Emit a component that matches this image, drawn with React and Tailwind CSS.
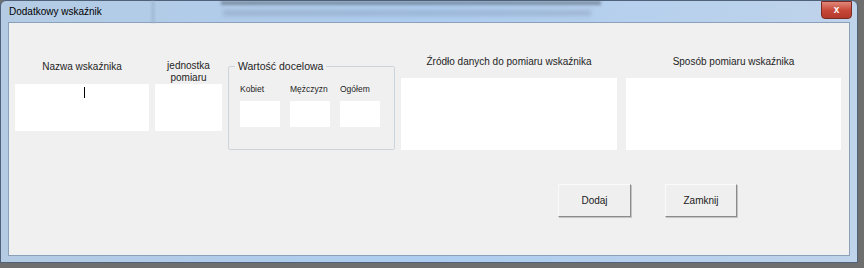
import React from "react";

const font = { fontFamily: '"Liberation Sans", "Noto Sans", sans-serif' };

const Box = ({ className = "", children }) => (
  <div className={`bg-white ${className}`}>{children}</div>
);

const Btn = ({ label, className = "" }) => (
  <button
    className={`h-[33px] bg-[#efefef] border border-t-[#fafafa] border-l-[#fafafa] border-r-[#8c8c8c] border-b-[#8c8c8c] text-[10px] text-[#1a1a1a] ${className}`}
    style={{ boxShadow: "1px 1px 0 #c4c4c4" }}
  >
    {label}
  </button>
);

export default function App() {
  return (
    <div className="w-[864px] h-[268px] bg-[#6e6e6e] overflow-hidden" style={font}>
      <div className="w-[858px] h-[263px] rounded-t-[6px] border border-[#50627a] bg-gradient-to-r from-[#b4cbe3] via-[#aecdf0] to-[#bfd3ea] flex flex-col relative">
        {/* blurred window behind the glass */}
        <div className="absolute left-[220px] top-[0px] w-[380px] h-[4px] bg-[#4a5563] opacity-50 blur-[1.5px]" />
        <div className="absolute left-[222px] top-[9px] w-[368px] h-[6px] bg-[#7f93ad] opacity-40 blur-[2px]" />
        <div className="absolute left-[150px] top-0 w-[4px] h-[22px] bg-[#9bb5d0] opacity-60 blur-[1px]" />

        {/* title bar */}
        <div className="h-[21px] flex items-center justify-between relative">
          <span className="ml-[8px] text-[10px] text-black">Dodatkowy wskaźnik</span>
          <div className="w-[31px] h-[18px] mr-[5px] -mt-[3px] rounded-b-[4px] border border-[#7a2a22] bg-gradient-to-b from-[#e0877b] via-[#c8493a] to-[#b43a2b] flex items-center justify-center text-white text-[10px] font-bold leading-none">
            x
          </div>
        </div>

        {/* client area */}
        <div className="mx-[7px] mb-[6px] flex-1 border border-[#8aa0bb] bg-[#f0f0f0] flex flex-col text-[10px] text-[#1e1e1e]">
          <div className="flex items-start ml-[6px]">
            {/* Nazwa wskaźnika */}
            <div className="w-[134px] pt-[38px] flex flex-col">
              <div className="text-center leading-[12px]">Nazwa wskaźnika</div>
              <Box className="mt-[11px] h-[47px] flex justify-center pt-[3px]">
                <div className="w-px h-[11px] bg-black ml-[5px]" />
              </Box>
            </div>

            {/* jednostka pomiaru */}
            <div className="w-[67px] ml-[6px] pt-[37px] flex flex-col">
              <div className="text-center leading-[12px]">jednostka</div>
              <div className="text-center leading-[12px]">pomiaru</div>
              <Box className="h-[47px]" />
            </div>

            {/* Wartość docelowa */}
            <div className="w-[167px] h-[84px] ml-[6px] mt-[43px] border border-[#cdd5dc] rounded-[2px] relative">
              <span className="absolute -top-[8px] left-[6px] px-[3px] bg-[#f0f0f0] text-[10.5px] leading-[14px]">
                Wartość docelowa
              </span>
              <div className="flex gap-[10px] ml-[11px] mt-[16px]">
                {["Kobiet", "Mężczyzn", "Ogółem"].map((l) => (
                  <div key={l} className="w-[40px] flex flex-col">
                    <div className="text-[8.5px] leading-[12px] whitespace-nowrap">{l}</div>
                    <Box className="mt-[6px] h-[26px]" />
                  </div>
                ))}
              </div>
            </div>

            {/* Źródło danych */}
            <div className="w-[216px] ml-[6px] pt-[33px] flex flex-col">
              <div className="text-center leading-[12px]">Źródło danych do pomiaru wskaźnika</div>
              <Box className="mt-[10px] h-[72px]" />
            </div>

            {/* Sposób pomiaru */}
            <div className="w-[215px] ml-[9px] pt-[33px] flex flex-col">
              <div className="text-center leading-[12px]">Sposób pomiaru wskaźnika</div>
              <Box className="mt-[10px] h-[72px]" />
            </div>
          </div>

          <div className="flex mt-[34px] ml-[549px] gap-[34px]">
            <Btn label="Dodaj" className="w-[73px]" />
            <Btn label="Zamknij" className="w-[72px]" />
          </div>
        </div>
      </div>
    </div>
  );
}
